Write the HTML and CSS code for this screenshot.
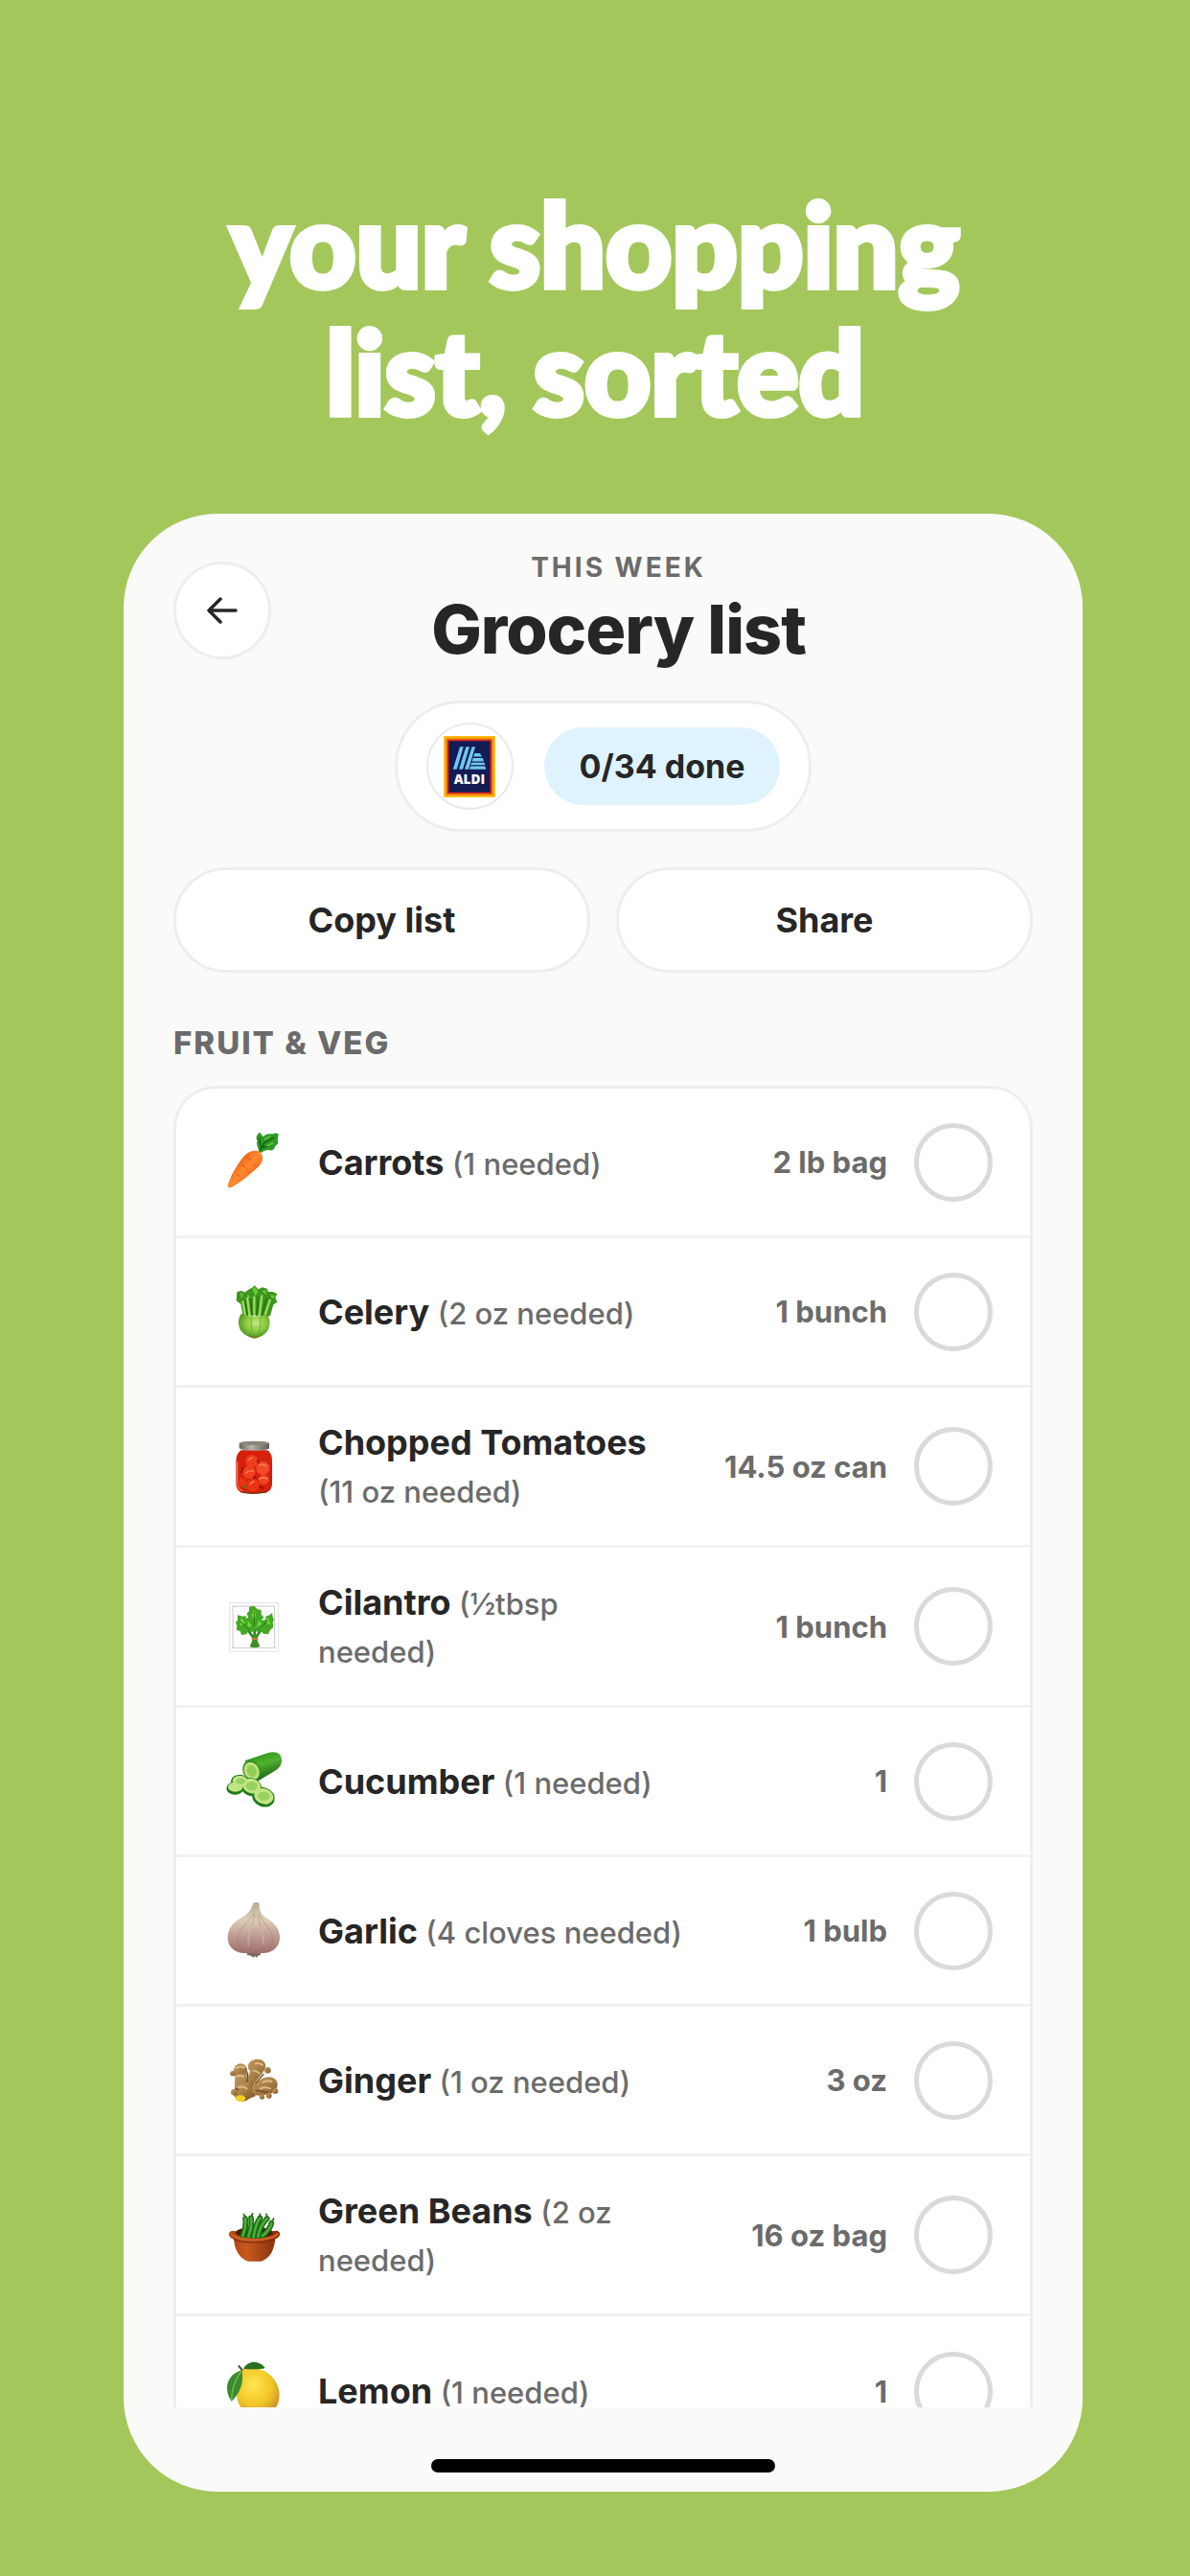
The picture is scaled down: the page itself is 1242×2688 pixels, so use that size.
FILE: index.html
```html
<!DOCTYPE html>
<html lang="en">
<head>
  <meta charset="UTF-8">
  <meta name="viewport" content="width=device-width, initial-scale=1.0">
  <link rel="stylesheet" href="styles.css">
  <title>Grocery list</title>
</head>
<body>
  <h1 class="headline">your shopping<br>list, sorted</h1>

  <main class="phone">
    <header class="header">
      <button class="back" type="button" aria-label="Back">
        <svg viewBox="0 0 34 28" width="34" height="28" fill="none" stroke="#262626" stroke-width="3.5" stroke-linecap="round" stroke-linejoin="round">
          <path d="M31 14H3M15 2L3 14l12 12"/>
        </svg>
      </button>
      <div class="titles">
        <p class="eyebrow">THIS WEEK</p>
        <h2 class="title">Grocery list</h2>
      </div>
    </header>

    <div class="summary">
      <span class="store">
        <svg viewBox="133 84 162 193" width="54" height="64" role="img" aria-label="Aldi">
          <rect x="133" y="84" width="162" height="193" fill="#fdb913"/>
          <rect x="139" y="90" width="150" height="181" fill="#f58a0b"/>
          <rect x="144" y="95" width="140" height="171" fill="#d5281e"/>
          <rect x="149" y="100" width="130" height="161" fill="#141c55"/>
          <g fill="#6fc8ee">
            <path d="M184 118h11l-21 71h-12zM203 118h11l-21 71h-12zM222 118h10l-21 71h-12z"/>
            <path d="M230 138h17l6 11h-26zM225 153h31l3 11h-37zM220 168h41l2 7h-45zM217 179h46l3 10h-52z"/>
          </g>
          <text x="214" y="234" text-anchor="middle" class="store-name">ALDI</text>
        </svg>
      </span>
      <span class="progress">0/34 done</span>
    </div>

    <div class="actions">
      <button class="action" type="button">Copy list</button>
      <button class="action" type="button">Share</button>
    </div>

    <section class="group">
      <h3 class="group-title">FRUIT &amp; VEG</h3>
      <ul class="list">
        <li class="item">
          <svg class="icon" viewBox="75 68 180 180" aria-hidden="true">
            <defs>
              <linearGradient id="carrot" x1="0" y1="0" x2="1" y2="1">
                <stop offset="0.2" stop-color="#e4581a"/><stop offset="0.5" stop-color="#ff8a2e"/><stop offset="0.9" stop-color="#d94e14"/>
              </linearGradient>
            </defs>
            <path d="M180 124c0-14-10-22-4-34-8-8 0-24 8-26 6 4 4 12 12 12 8-10 22-6 30-8 6-2 14-2 16 2 0 8-4 12-2 20 2 8-2 14-8 16-2 10-10 16-18 14-10-2-14 0-26 8z" fill="#2f9a26"/>
            <path d="M184 120l14-24 30-16M190 112l28-8M186 108l-4-26" stroke="#12641a" stroke-width="5" fill="none"/>
            <path d="M198 86l18-10M206 108l20-12" stroke="#62c83c" stroke-width="5"/>
            <path d="M154 124c12-6 36-4 38 18 1 14-6 24-22 38-22 20-52 44-76 56-6 3-12 0-10-8 6-26 26-58 42-80 9-12 16-19 28-24z" fill="url(#carrot)"/>
            <path d="M140 142l16 8M126 166l12 6M148 186l-10-8M174 172l-10-6M112 196l10 6" stroke="#d8561a" stroke-width="3"/>
          </svg>
          <label class="name" for="carrots">Carrots <span class="needed">(1 needed)</span></label>
          <span class="quantity">2 lb bag</span>
          <input class="check" type="checkbox" id="carrots">
        </li>
        <li class="item">
          <svg class="icon" viewBox="75 537 180 180" aria-hidden="true">
            <defs>
              <radialGradient id="celery" cx="0.55" cy="0.4" r="0.65">
                <stop offset="0" stop-color="#c6ea82"/><stop offset="0.55" stop-color="#84c63c"/><stop offset="1" stop-color="#3f861a"/>
              </radialGradient>
            </defs>
            <path d="M130 636l-6-34-14-10 2-28 14-4 10 6 14-10 8-4 10-8 10 12 14-6 14 4 4 10 14 0 14 6-6 12 6 14-12 8-10 36z" fill="#3d9420"/>
            <path d="M122 564l10 8-6 14zM160 556l8-8 10 14-8 16zM190 562l14-4-2 16zM216 574l18 2-12 10zM146 570l8 12-12 4z" fill="#68c92f"/>
            <path d="M138 640l-8-48M152 640l-8-58M166 640l0-62M182 640l8-66M198 642l18-54" stroke="#9cdc58" stroke-width="7" fill="none"/>
            <path d="M145 640l-8-50M159 640l-4-56M174 640l4-60M190 640l14-56" stroke="#236d14" stroke-width="4" fill="none"/>
            <path d="M126 632c-14 16-12 48 6 62 14 16 50 18 66 2 18-12 22-46 8-62-24 10-54 10-80-2z" fill="url(#celery)"/>
            <path d="M134 642c-8 20-2 40 12 54M158 642c-4 24 0 42 8 58M184 642c4 24 0 40-8 58" stroke="#6fb034" stroke-width="3" fill="none"/>
            <path d="M150 702q16 10 34 0" stroke="#7a7a28" stroke-width="6" fill="none"/>
          </svg>
          <label class="name" for="celery-item">Celery <span class="needed">(2 oz needed)</span></label>
          <span class="quantity">1 bunch</span>
          <input class="check" type="checkbox" id="celery-item">
        </li>
        <li class="item">
          <svg class="icon" viewBox="75 60 180 180" aria-hidden="true">
            <defs>
              <linearGradient id="lid"><stop offset="0" stop-color="#6a655d"/><stop offset="0.4" stop-color="#b9b3a8"/><stop offset="1" stop-color="#5f5a54"/></linearGradient>
            </defs>
            <path d="M124 100h84c14 12 14 24 14 40v64c0 18-10 28-26 30h-60c-18-2-27-12-27-30v-64c0-16 1-28 15-40z" fill="#d4200c"/>
            <path d="M113 136v66c0 14 6 22 18 26" stroke="#ff6a48" stroke-width="4" fill="none"/>
            <circle cx="158" cy="134" r="20" fill="#ee3c1c"/><circle cx="193" cy="156" r="21" fill="#f44a28"/>
            <circle cx="150" cy="169" r="20" fill="#f2401c"/><circle cx="162" cy="209" r="20" fill="#ea3414"/>
            <circle cx="196" cy="192" r="16" fill="#ee4222"/><circle cx="128" cy="200" r="14" fill="#e63216"/>
            <path d="M140 172q10-12 24-6M182 148q12-8 22 2M148 130l14-8M180 190q16-8 28 0M152 206l14-10" stroke="#ff8464" stroke-width="4" fill="none"/>
            <path d="M170 180l-6 10M176 130l4 12M180 212l16 8M132 152l-6 20" stroke="#9c1206" stroke-width="5"/>
            <path d="M130 210l12 10" stroke="#5b7a1a" stroke-width="5"/>
            <path d="M122 230q44 10 84 0" stroke="#6a3a12" stroke-width="4" fill="none"/>
            <path d="M119 78c10-9 84-9 94 0v16c-4 9-88 9-94 0z" fill="url(#lid)"/>
            <ellipse cx="166" cy="78" rx="45" ry="6" fill="#8b857b"/>
          </svg>
          <label class="name" for="tomatoes">Chopped Tomatoes<br><span class="needed">(11 oz needed)</span></label>
          <span class="quantity">14.5 oz can</span>
          <input class="check" type="checkbox" id="tomatoes">
        </li>
        <li class="item">
          <svg class="icon" viewBox="75 561 180 180" aria-hidden="true">
            <rect x="89" y="578" width="153" height="152" fill="#fff" stroke="#e2e2e2" stroke-width="3"/>
            <rect x="99" y="588" width="131" height="131" fill="#fcfcfc" stroke="#c9c9c9" stroke-width="3"/>
            <path d="M166 690l-28-38M167 690v-60M168 690l28-40" stroke="#2f8a1c" stroke-width="8"/>
            <path d="M167 588l9 10 12 2 0 14 8 8-8 12 14-4 0-10 12-4 8-6 2 12 4 8-4 10 2 14-10 8-6 14-16-2-8-10-10 6-8-8-10 8-10-6-6 12-16 2-4-12-12-4 2-12-4-12 6-6 0-16 16 4 10-2 0 10 8-6-6-10 8-8 0-14 12-2z" fill="#44a824"/>
            <path d="M166 600l6 14-6 18-8-16zM124 624l14 16-16 10zM208 622l-4 20 14 4zM180 632l10 12-16 10zM146 634l12 14-12 8z" fill="#76d63e"/>
            <path d="M166 606v44M122 636l30 26M210 634l-32 26" stroke="#207a16" stroke-width="3"/>
            <path d="M158 682h20l-2 14 8 18q-17 8-32 0l8-18z" fill="#3f8f22"/>
            <path d="M158 690h20" stroke="#b8804a" stroke-width="6"/>
          </svg>
          <label class="name" for="cilantro">Cilantro <span class="needed">(½tbsp<br>needed)</span></label>
          <span class="quantity">1 bunch</span>
          <input class="check" type="checkbox" id="cilantro">
        </li>
        <li class="item">
          <svg class="icon" viewBox="75 87 180 180" aria-hidden="true">
            <defs>
              <linearGradient id="cucumber" x1="0.3" y1="0" x2="0.7" y2="1"><stop offset="0" stop-color="#2d8c1e"/><stop offset="0.4" stop-color="#4fb32e"/><stop offset="1" stop-color="#125010"/></linearGradient>
            </defs>
            <path d="M136 112l72-24c24-8 44 0 44 22 0 16-10 26-22 34l-54 32z" fill="url(#cucumber)"/>
            <ellipse cx="158" cy="143" rx="27" ry="33" transform="rotate(-25 158 143)" fill="#2f8a22"/>
            <ellipse cx="158" cy="144" rx="23" ry="29" transform="rotate(-25 158 144)" fill="#b9e27a"/>
            <ellipse cx="158" cy="144" rx="14" ry="19" transform="rotate(-25 158 144)" fill="#93cc56"/>
            <g fill="#1f7a1c">
              <ellipse cx="106" cy="198" rx="27" ry="20"/><ellipse cx="122" cy="178" rx="29" ry="22" transform="rotate(10 122 178)"/>
              <ellipse cx="157" cy="194" rx="33" ry="28" transform="rotate(20 157 194)"/><ellipse cx="195" cy="226" rx="36" ry="30" transform="rotate(20 195 226)"/>
            </g>
            <g fill="#c0e684">
              <ellipse cx="107" cy="194" rx="23" ry="15"/><ellipse cx="123" cy="176" rx="25" ry="17" transform="rotate(10 123 176)"/>
              <ellipse cx="158" cy="191" rx="29" ry="23" transform="rotate(20 158 191)"/><ellipse cx="196" cy="223" rx="31" ry="24" transform="rotate(20 196 223)"/>
            </g>
            <g fill="#98d25e">
              <ellipse cx="123" cy="176" rx="15" ry="9"/><ellipse cx="158" cy="191" rx="18" ry="14"/><ellipse cx="196" cy="223" rx="19" ry="14"/>
            </g>
          </svg>
          <label class="name" for="cucumber-item">Cucumber <span class="needed">(1 needed)</span></label>
          <span class="quantity">1</span>
          <input class="check" type="checkbox" id="cucumber-item">
        </li>
        <li class="item">
          <svg class="icon" viewBox="75 555 180 180" aria-hidden="true">
            <defs>
              <linearGradient id="garlic" x1="0" y1="0" x2="0" y2="1"><stop offset="0" stop-color="#b9aa98"/><stop offset="0.35" stop-color="#dccdb4"/><stop offset="0.62" stop-color="#c4a198"/><stop offset="1" stop-color="#9c6f68"/></linearGradient>
            </defs>
            <path d="M142 710h44v10l-8 2-4 6-6-4-6 4-6-6-12-2z" fill="#7c6a5c"/>
            <path d="M162 560c4-7 16-7 20 0 0 24 6 34 22 44 22 14 42 32 42 62 0 30-24 46-48 48h-66c-26-2-49-18-49-48s20-50 42-62c18-10 30-22 37-44z" fill="url(#garlic)"/>
            <path d="M166 590c-16 26-48 44-52 74-2 18 4 32 12 42M168 596c-8 30-22 50-22 76 0 18 4 30 8 40M176 596c8 30 18 50 20 76 0 18-4 30-8 40M180 594c14 24 40 44 44 72 2 16-4 30-12 40" stroke="#a27d74" stroke-width="3" fill="none" opacity="0.5"/>
            <path d="M158 624c-10 24-12 42-10 70M186 630c8 20 10 38 8 58" stroke="#ead8cc" stroke-width="6" fill="none" opacity="0.35"/>
          </svg>
          <label class="name" for="garlic-item">Garlic <span class="needed">(4 cloves needed)</span></label>
          <span class="quantity">1 bulb</span>
          <input class="check" type="checkbox" id="garlic-item">
        </li>
        <li class="item">
          <svg class="icon" viewBox="75 35 180 180" aria-hidden="true">
            <defs>
              <linearGradient id="ginger" x1="0" y1="0" x2="1" y2="1"><stop offset="0" stop-color="#c39a60"/><stop offset="0.5" stop-color="#a97f48"/><stop offset="1" stop-color="#7d5628"/></linearGradient>
            </defs>
            <g fill="url(#ginger)">
              <ellipse cx="123" cy="96" rx="22" ry="24"/>
              <ellipse cx="99" cy="103" rx="9" ry="8"/>
              <path d="M106 106l36-4 2 34 20-6 6 44-34 14-32-12z"/>
              <ellipse cx="130" cy="162" rx="28" ry="28"/>
              <ellipse cx="103" cy="162" rx="10" ry="10"/>
              <path d="M150 70c6-10 34-18 46-4 8 8 6 20-2 32l-34 44-20-10 14-36c-8-6-10-18-4-26z"/>
              <circle cx="208" cy="93" r="10"/>
              <path d="M158 148c14-20 34-34 56-34 22 2 30 20 22 36-8 18-36 22-60 22-10-2-20-14-18-24z"/>
              <circle cx="190" cy="176" r="8"/><circle cx="212" cy="172" r="9"/><circle cx="232" cy="158" r="9"/>
            </g>
            <path d="M110 86q12-8 24-2M112 112q10-4 20 0M170 72q12-4 22 4M164 94q10 0 18 8M194 130q14-8 26-2M186 150q14-6 30 0M118 146q12-4 24 4" stroke="#dcbd88" stroke-width="6" fill="none" stroke-linecap="round"/>
            <path d="M146 100l-2 30M196 104l-28 32M170 156l40 6M106 150l12 4" stroke="#70491f" stroke-width="4" fill="none"/>
            <ellipse cx="123" cy="181" rx="15" ry="10" fill="#f3d21c"/>
          </svg>
          <label class="name" for="ginger-item">Ginger <span class="needed">(1 oz needed)</span></label>
          <span class="quantity">3 oz</span>
          <input class="check" type="checkbox" id="ginger-item">
        </li>
        <li class="item">
          <svg class="icon" viewBox="75 519 180 180" aria-hidden="true">
            <defs>
              <linearGradient id="bowl"><stop offset="0" stop-color="#a8400f"/><stop offset="0.35" stop-color="#c9581f"/><stop offset="1" stop-color="#7e2c08"/></linearGradient>
            </defs>
            <path d="M88 602c-4 8 2 18 14 20 2 38 22 64 46 70h40c26-8 40-32 44-70 12-4 18-14 12-22-6-6-14-4-20-2-30-20-88-20-116 0-8-4-16-2-20 4z" fill="url(#bowl)"/>
            <ellipse cx="166" cy="602" rx="58" ry="16" fill="#4a1c08"/>
            <g stroke="#1c6a18" stroke-width="17" fill="none" stroke-linecap="round">
              <path d="M130 612q12-30 8-54M148 614q12-34 8-58M164 616q6-40 20-60M178 614q6-34 28-56M192 612q24-20 28-40"/>
            </g>
            <g stroke="#4cae34" stroke-width="8" fill="none" stroke-linecap="round">
              <path d="M130 612q12-30 8-54M148 614q12-34 8-58M164 616q6-40 20-60M178 614q6-34 28-56M192 612q24-20 28-40"/>
            </g>
            <path d="M138 552l-5-8M158 550l3-8M184 552l0-9M206 552l-2-8M222 566l5-8" stroke="#2e6a1e" stroke-width="5" stroke-linecap="round"/>
            <path d="M92 604c10 26 136 28 148 0" stroke="#cf6026" stroke-width="7" fill="none"/>
            <path d="M100 620c20 16 110 18 130 0" stroke="#85300c" stroke-width="4" fill="none"/>
          </svg>
          <label class="name" for="beans">Green Beans <span class="needed">(2 oz<br>needed)</span></label>
          <span class="quantity">16 oz bag</span>
          <input class="check" type="checkbox" id="beans">
        </li>
        <li class="item">
          <svg class="icon" viewBox="75 78 180 180" aria-hidden="true">
            <defs>
              <radialGradient id="lemon" cx="0.4" cy="0.35" r="0.7"><stop offset="0" stop-color="#ffe650"/><stop offset="0.6" stop-color="#f2c626"/><stop offset="1" stop-color="#c8912a"/></radialGradient>
            </defs>
            <path d="M130 100c30-8 66-2 86 18 20 18 32 44 28 72-2 30-26 56-60 56-40 0-66-22-72-58-4-34 0-66 18-88z" fill="url(#lemon)"/>
            <path d="M132 98c14-26 50-28 68-2-20 6-46 4-68 2z" fill="#2a7020"/>
            <path d="M127 102c-30 10-48 32-46 60 2 16 6 28 14 38 26-24 40-58 32-98z" fill="#3b8c2c"/>
            <path d="M125 106q-30 42-30 90" stroke="#7cba60" stroke-width="4" fill="none"/>
            <path d="M118 90l10 12" stroke="#54582c" stroke-width="6" stroke-linecap="round"/>
          </svg>
          <label class="name" for="lemon-item">Lemon <span class="needed">(1 needed)</span></label>
          <span class="quantity">1</span>
          <input class="check" type="checkbox" id="lemon-item">
        </li>
      </ul>
    </section>

    <div class="home-bar"></div>
  </main>
</body>
</html>
```
FILE: styles.css
```css
* {
  box-sizing: border-box;
}

body {
  margin: 0;
  height: 100vh;
  display: flex;
  flex-direction: column;
  padding: 188px 112px 88px 129px;
  background-color: #a3c75b;
  font-family: Inter, "Liberation Sans", sans-serif;
  color: #262626;
}

h1, h2, h3, p, ul {
  margin: 0;
  padding: 0;
}

.headline {
  margin: 0 17px 82px 0;
  font-family: Lato, "Open Sans", sans-serif;
  font-size: 120px;
  font-weight: 900;
  line-height: 133px;
  text-align: center;
  color: #fff;
  -webkit-text-stroke: 6px #fff;
  stroke-linejoin: round;
}

.phone {
  flex: 1;
  min-height: 0;
  display: flex;
  flex-direction: column;
  padding: 38px 52px 20px;
  border-radius: 98px;
  background-color: #fafaf8;
  overflow: hidden;
}

.header {
  display: flex;
  align-items: center;
  padding-right: 70px;
}

.back {
  display: flex;
  align-items: center;
  justify-content: center;
  width: 102px;
  height: 102px;
  padding: 0;
  border: 3px solid #eeeeec;
  border-radius: 50%;
  background-color: #fff;
}

.titles {
  flex: 1;
  text-align: center;
}

.eyebrow {
  margin-bottom: 5px;
  font-size: 28px;
  font-weight: 700;
  line-height: 36px;
  letter-spacing: 3px;
  color: #6b6b6b;
}

.title {
  font-size: 70px;
  font-weight: 800;
  line-height: 84px;
  letter-spacing: -1px;
}

.summary {
  align-self: center;
  display: flex;
  align-items: center;
  gap: 32px;
  margin-top: 32px;
  padding: 20px 30px;
  border: 3px solid #eeeeec;
  border-radius: 70px;
  background-color: #fff;
}

.store {
  display: flex;
  align-items: center;
  justify-content: center;
  width: 91px;
  height: 91px;
  border: 2px solid #eaeaea;
  border-radius: 50%;
}

.store-name {
  font-family: "Open Sans", sans-serif;
  font-size: 41px;
  font-weight: 800;
  fill: #fff;
}

.progress {
  padding: 0 37px;
  border-radius: 41px;
  background-color: #def3fe;
  font-size: 34px;
  font-weight: 700;
  line-height: 81px;
}

.actions {
  display: flex;
  gap: 27px;
  margin-top: 37px;
}

.action {
  flex: 1;
  height: 110px;
  border: 3px solid #eeeeec;
  border-radius: 55px;
  background-color: #fff;
  color: inherit;
  font-family: inherit;
  font-size: 36px;
  font-weight: 700;
}

.group {
  flex: 1;
  min-height: 0;
  margin-top: 53px;
  overflow: hidden;
}

.group-title {
  margin-bottom: 25px;
  font-size: 33px;
  font-weight: 800;
  line-height: 40px;
  letter-spacing: 2px;
  color: #6b6b6b;
}

.list {
  border: 3px solid #eeeeec;
  border-radius: 44px;
  background-color: #fff;
  list-style: none;
}

.item {
  display: flex;
  align-items: center;
  min-height: 156px;
  padding: 32px 39px 32px 51px;
  border-bottom: 3px solid #f2f2f0;
}

.item:last-child {
  border-bottom: none;
}

.icon {
  flex: none;
  width: 60px;
  height: 60px;
  margin-right: 37px;
  overflow: visible;
}

.name {
  font-size: 36px;
  font-weight: 700;
  line-height: 50px;
}

.needed {
  font-size: 31px;
  font-weight: 500;
  color: #6b6b6b;
}

/* keep the smaller text from growing the line box */
.name .needed {
  line-height: 1;
}

.quantity {
  margin-left: auto;
  font-size: 31px;
  font-weight: 700;
  color: #6b6b6b;
  white-space: nowrap;
}

.check {
  flex: none;
  appearance: none;
  width: 82px;
  height: 82px;
  margin: 0 0 0 28px;
  border: 5px solid #dadada;
  border-radius: 50%;
}

.check:checked {
  background-color: #a3c75b;
}

.home-bar {
  flex: none;
  align-self: center;
  width: 40%;
  height: 14px;
  margin-top: 54px;
  border-radius: 7px;
  background-color: #000;
}
```
